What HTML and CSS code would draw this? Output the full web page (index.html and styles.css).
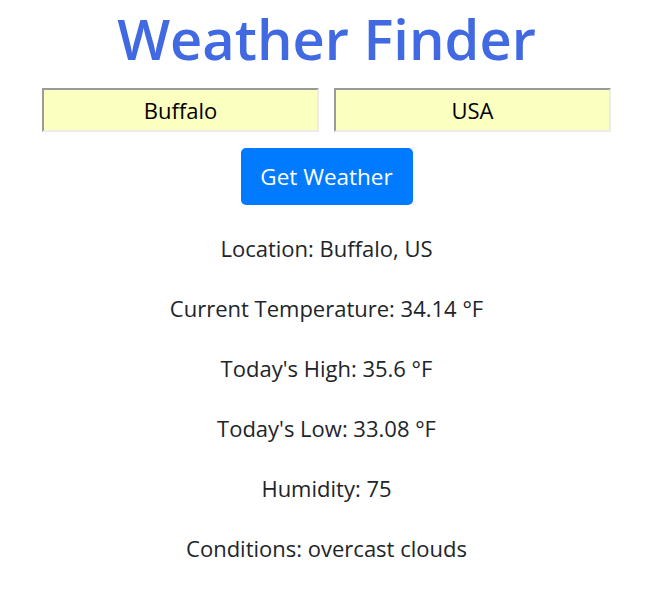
FILE: index.html
```html
<!DOCTYPE html>
<html lang="en">
<head>
<meta charset="utf-8">
<title>Weather Finder</title>
<link rel="stylesheet" href="styles.css">
</head>
<body>
<main class="app">
  <h1 class="title">Weather Finder</h1>
  <form class="search">
    <div class="fields">
      <input class="field" type="text" value="Buffalo">
      <input class="field" type="text" value="USA">
    </div>
    <button class="btn" type="button">Get Weather</button>
  </form>
  <section class="results">
    <p class="line">Location: Buffalo, US</p>
    <p class="line">Current Temperature: 34.14 °F</p>
    <p class="line">Today's High: 35.6 °F</p>
    <p class="line">Today's Low: 33.08 °F</p>
    <p class="line">Humidity: 75</p>
    <p class="line">Conditions: overcast clouds</p>
  </section>
</main>
</body>
</html>
```

FILE: styles.css
```css
* { box-sizing: border-box; }
html, body { margin: 0; padding: 0; background: #fff; }
body {
  font-family: "Open Sans", "Noto Sans", sans-serif;
  color: #212529;
}
.app {
  display: flex;
  flex-direction: column;
  align-items: center;
  padding-right: 2px;
}
.title {
  margin: 0;
  font-size: 56px;
  font-weight: 600;
  line-height: normal;
  color: #4169e1;
}
.search {
  display: flex;
  flex-direction: column;
  align-items: center;
  gap: 16px;
  margin-top: 12px;
}
.fields {
  display: flex;
  gap: 15px;
}
.field {
  width: 277px;
  height: 44px;
  border-width: 2px;
  border-style: solid;
  border-color: #9a9a9a #ececec #ececec #9a9a9a;
  background: #fbffc0;
  font-family: inherit;
  font-size: 22px;
  color: #000;
  text-align: center;
  padding: 0;
}
.btn {
  width: 172px;
  height: 57px;
  border: none;
  border-radius: 5px;
  background: #007bff;
  color: #fff;
  font-family: inherit;
  font-size: 22.5px;
  padding: 0;
}
.results {
  display: flex;
  flex-direction: column;
  align-items: center;
  margin-top: 28px;
  gap: 30px;
}
.line {
  margin: 0;
  font-size: 22px;
  line-height: 30px;
}
```
